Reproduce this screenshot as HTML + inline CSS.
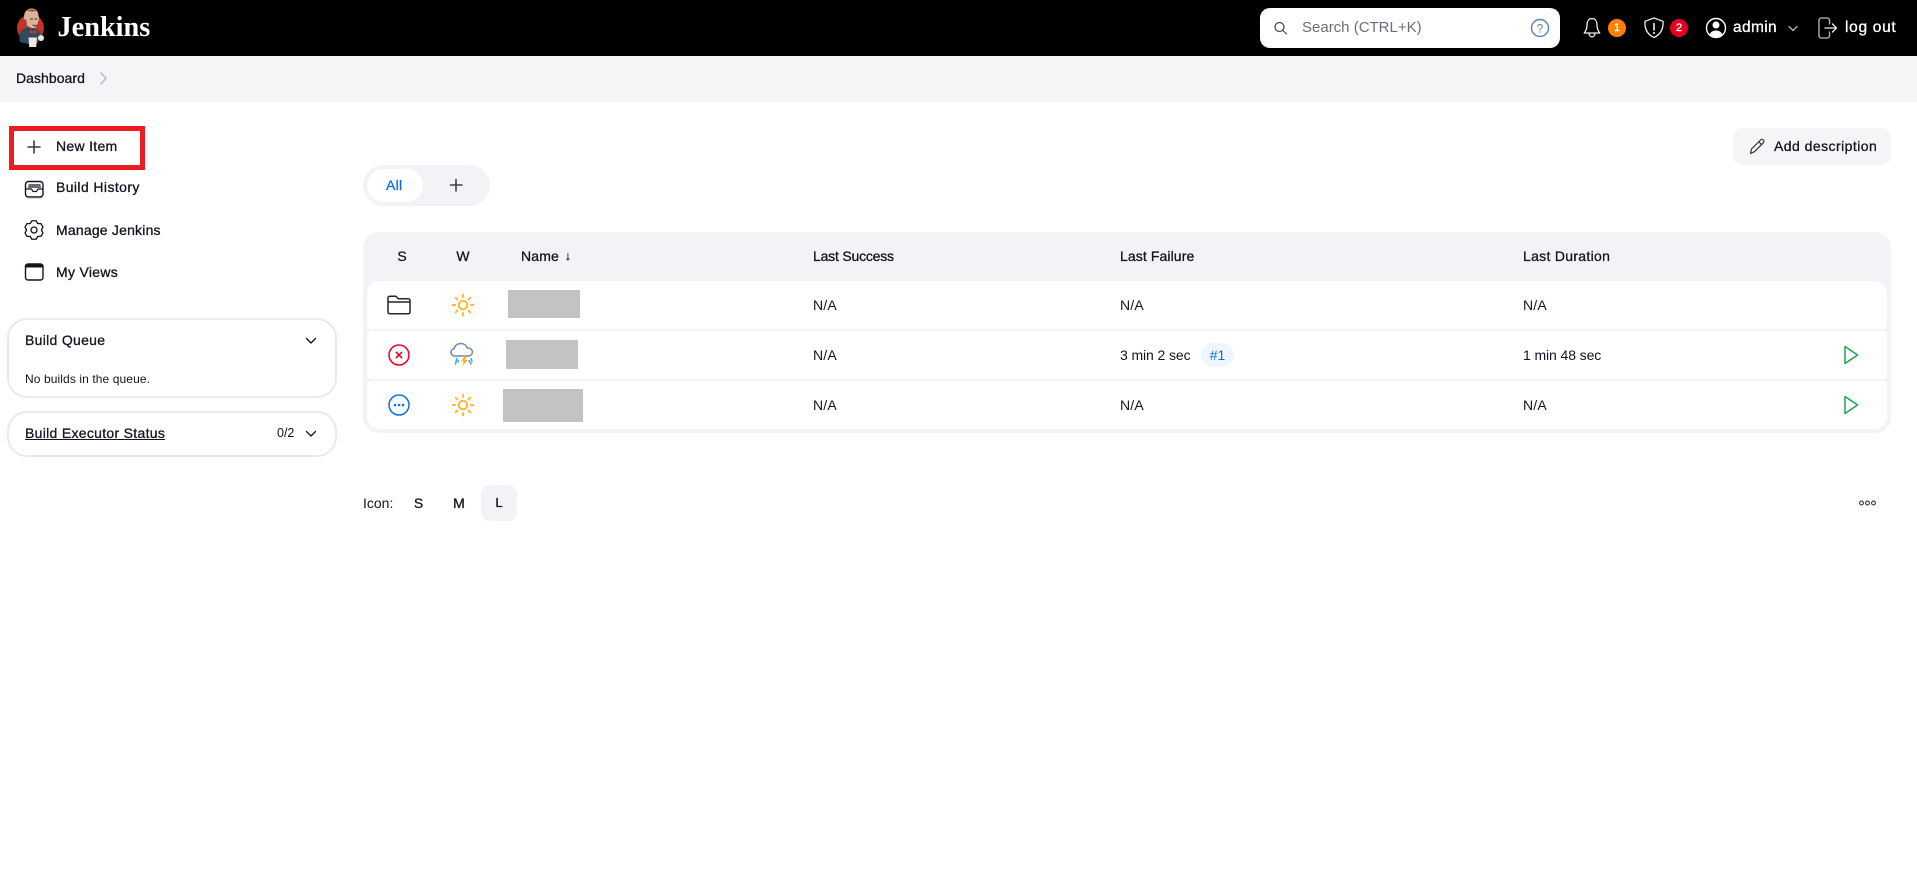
<!DOCTYPE html>
<html lang="en">
<head>
<meta charset="utf-8">
<title>Dashboard - Jenkins</title>
<style>
html,body{margin:0;padding:0;background:#fff}
body{position:relative;width:1917px;height:877px;overflow:hidden;font-family:"Liberation Sans",sans-serif;font-size:14px;color:#14141f}
.b{position:absolute;box-sizing:border-box}
.t{position:absolute;height:20px;line-height:20px;white-space:nowrap}
.m{-webkit-text-stroke:.3px currentColor}
.g{background:#c3c3c3;position:absolute}
svg.o{position:absolute;left:0;top:0;z-index:5}
</style>
</head>
<body>
<header class="b" style="left:0;top:0;width:1917px;height:56px;background:#000"></header>
<div class="t" style="left:57.500px;top:18px;font:bold 28.300px/20px 'Liberation Serif',serif;color:#fff">Jenkins</div>
<div class="b" style="left:1260px;top:8px;width:300px;height:40px;background:#fff;border-radius:10px"></div>
<div class="t" style="left:1302px;top:18px;font-size:15px;color:#6e6e78">Search (CTRL+K)</div>
<div class="b" style="left:1608px;top:19px;width:18px;height:18px;border-radius:50%;background:#fe820a"></div>
<div class="t m" style="left:1608px;top:18px;width:18px;text-align:center;font-size:11px;color:#fff">1</div>
<div class="b" style="left:1670px;top:19px;width:18px;height:18px;border-radius:50%;background:#e6001f"></div>
<div class="t m" style="left:1670px;top:18px;width:18px;text-align:center;font-size:11px;color:#fff">2</div>
<div class="t m" style="left:1733px;top:18px;font-size:15.500px;letter-spacing:.35px;color:#fff">admin</div>
<div class="t m" style="left:1845px;top:18px;font-size:15.500px;letter-spacing:.7px;color:#fff">log out</div>

<div class="b" style="left:0;top:56px;width:1917px;height:46px;background:#f5f5f7"></div>
<div class="t m" style="left:16px;top:68px;letter-spacing:.05px">Dashboard</div>

<nav>
<div class="b" style="left:9px;top:126px;width:136px;height:44px;border:5px solid #ed1c24"></div>
<div class="t m" style="left:56px;top:136px;letter-spacing:.3px">New Item</div>
<div class="t m" style="left:56px;top:177px;letter-spacing:.4px">Build History</div>
<div class="t m" style="left:56px;top:219.500px;letter-spacing:.2px">Manage Jenkins</div>
<div class="t m" style="left:56px;top:261.500px;letter-spacing:.3px">My Views</div>
</nav>

<div class="b" style="left:7px;top:318px;width:330px;height:80px;border:2px solid #e9e9f1;border-radius:20px"></div>
<div class="t m" style="left:25px;top:330px;letter-spacing:.3px">Build Queue</div>
<div class="t" style="left:25px;top:369px;font-size:12px;letter-spacing:.1px">No builds in the queue.</div>
<div class="b" style="left:7px;top:411px;width:330px;height:46px;border:2px solid #e9e9f1;border-radius:20px"></div>
<div class="t m" style="left:25px;top:423px;letter-spacing:.3px;text-decoration:underline">Build Executor Status</div>
<div class="t" style="left:277px;top:423px;font-size:12.500px">0/2</div>

<div class="b" style="left:1733px;top:128px;width:158px;height:37px;background:#f5f5f8;border-radius:10px"></div>
<div class="t m" style="left:1774px;top:135.500px;letter-spacing:.45px">Add description</div>

<div class="b" style="left:363px;top:165px;width:127px;height:41px;background:#f2f2f7;border-radius:21px"></div>
<div class="b" style="left:367px;top:169px;width:56px;height:33px;background:#fff;border-radius:17px"></div>
<div class="t m" style="left:386px;top:174.500px;letter-spacing:.3px;color:#0b6fe8">All</div>

<div class="b" style="left:363px;top:232px;width:1528px;height:201px;background:#f2f2f7;border-radius:16px"></div>
<div class="b" style="left:367px;top:281px;width:1520px;height:48px;background:#fff;border-radius:12px 12px 4px 4px"></div>
<div class="b" style="left:367px;top:331px;width:1520px;height:48px;background:#fff;border-radius:4px"></div>
<div class="b" style="left:367px;top:381px;width:1520px;height:48px;background:#fff;border-radius:4px 4px 12px 12px"></div>

<div class="t m" style="left:392px;top:246px;width:20px;text-align:center">S</div>
<div class="t m" style="left:453px;top:246px;width:20px;text-align:center">W</div>
<div class="t m" style="left:521px;top:246px;letter-spacing:.15px">Name</div>
<div class="t m" style="left:565px;top:246px;font-size:12px">↓</div>
<div class="t m" style="left:813px;top:246px;letter-spacing:-.2px">Last Success</div>
<div class="t m" style="left:1120px;top:246px;letter-spacing:.1px">Last Failure</div>
<div class="t m" style="left:1523px;top:246px;letter-spacing:.3px">Last Duration</div>

<div class="g" style="left:508px;top:290px;width:72px;height:28px"></div>
<div class="g" style="left:506px;top:340px;width:72px;height:29px"></div>
<div class="g" style="left:503px;top:389px;width:80px;height:33px"></div>

<div class="t" style="left:813px;top:295px;letter-spacing:.2px">N/A</div>
<div class="t" style="left:1120px;top:295px;letter-spacing:.2px">N/A</div>
<div class="t" style="left:1523px;top:295px;letter-spacing:.2px">N/A</div>
<div class="t" style="left:813px;top:345px;letter-spacing:.2px">N/A</div>
<div class="t" style="left:1120px;top:345px;letter-spacing:-.1px">3 min 2 sec</div>
<div class="b" style="left:1201px;top:343px;width:33px;height:24px;background:#f0f6fe;border-radius:12px"></div>
<div class="t" style="left:1201px;top:345px;width:33px;text-align:center;color:#0b6fe8">#1</div>
<div class="t" style="left:1523px;top:345px;letter-spacing:-.1px">1 min 48 sec</div>
<div class="t" style="left:813px;top:395px;letter-spacing:.2px">N/A</div>
<div class="t" style="left:1120px;top:395px;letter-spacing:.2px">N/A</div>
<div class="t" style="left:1523px;top:395px;letter-spacing:.2px">N/A</div>

<div class="t" style="left:363px;top:493px">Icon:</div>
<div class="t m" style="left:408.500px;top:493px;width:20px;text-align:center">S</div>
<div class="t m" style="left:449px;top:493px;width:20px;text-align:center">M</div>
<div class="b" style="left:481px;top:485px;width:36px;height:36px;background:#f2f2f7;border-radius:9px"></div>
<div class="t m" style="left:489px;top:493px;width:20px;text-align:center;font-size:13px">L</div>

<svg class="o" width="1917" height="877" viewBox="0 0 1917 877" fill="none" stroke-linecap="round" stroke-linejoin="round">
<!-- Jenkins logo -->
<circle cx="30.500" cy="28" r="13.500" fill="#c7302b"/>
<path d="M20 42c-1.500-6-.5-11 3-13l7-2.500 8 3.500 3.500 6-2.500 4-1 3-8 1.500z" fill="#2f4a5c"/>
<path d="M28.500 37.500h8.500l-.8 9.500h-7z" fill="#ece8df"/>
<path d="M30 30l3 1.500 3-1.500v3.800l-3-1.300-3 1.300z" fill="#e4312b"/>
<circle cx="41" cy="38" r="3" fill="#ece8df"/>
<path d="M24 17c0-5.500 3.500-8.500 7.500-8.500s7 2.500 7 7.500c1 1 1 3 .2 4l-1.200 4.500c-1 3.500-4.500 4.500-7.500 3-2.500-1.200-4.500-3.500-5.200-6.500-.7-1-.8-3-.8-4z" fill="#dcb394"/>
<path d="M27 11c2.500-2 7-2 9.500 0-3 .5-6.500.5-9.500 0zM24.300 20l1.700-1 1 6-1.700-1.500z" fill="#6e5141"/>
<path d="M30.500 19h2M35 19h2M33 25c1 1 2.500 1 4 0" stroke="#3e2a22" stroke-width="1"/>
<!-- search -->
<circle cx="1279.500" cy="27" r="4.500" stroke="#444" stroke-width="1.200"/>
<path d="M1283 30.500l3.500 3.500" stroke="#444" stroke-width="1.200"/>
<circle cx="1540" cy="28" r="8.500" stroke="#5f86b8" stroke-width="1.500"/>
<text x="1540" y="32.500" text-anchor="middle" font-family="Liberation Sans" font-size="12" fill="#5f86b8">?</text>
<!-- bell -->
<path d="M1592 18.500c-3.500 0-5 3-5 6.500 0 4-1 6-2.800 8h15.600c-1.800-2-2.800-4-2.800-8 0-3.500-1.500-6.500-5-6.500zM1589 33.500c.3 2 1.500 3.500 3 3.500s2.700-1.500 3-3.500" stroke="#eee" stroke-width="1.300"/>
<!-- shield -->
<path d="M1654 18l9 3.300c.5 7-1.500 12.700-9 16.200-7.500-3.500-9.500-9.200-9-16.200z" stroke="#eee" stroke-width="1.300"/>
<path d="M1654 23.500v6.500" stroke="#fff" stroke-width="1.500"/><circle cx="1654" cy="33" r="1" fill="#fff"/>
<!-- user -->
<circle cx="1716" cy="28" r="9.500" stroke="#fff" stroke-width="1.400"/>
<circle cx="1716" cy="25" r="3.500" fill="#fff"/>
<path d="M1709.500 34.500c1.500-3 4-4 6.500-4s5 1 6.500 4c-3.500 3.500-9.500 3.500-13 0z" fill="#fff"/>
<path d="M1789 26.500l4 4 4-4" stroke="#ddd" stroke-width="1.100"/>
<!-- logout -->
<path d="M1829.500 24v-3.500c0-1.500-1-2.500-2.500-2.500h-5.500c-1.500 0-2.500 1-2.500 2.500v15c0 1.500 1 2.500 2.500 2.500h5.500c1.500 0 2.500-1 2.500-2.500V32" stroke="#bbb" stroke-width="1.300"/>
<path d="M1825 28h11.500M1832.500 24l4 4-4 4" stroke="#eee" stroke-width="1.300"/>
<!-- breadcrumb chevron -->
<path d="M101 73l5 5.500-5 5.500" stroke="#a9b4c6" stroke-width="1.300"/>
<!-- new item plus -->
<path d="M34 141v12M28 147h12" stroke="#3b3b47" stroke-width="1.600"/>
<!-- build history -->
<rect x="25.500" y="181.500" width="17.500" height="15.500" rx="3" stroke="#14141f" stroke-width="1.400"/>
<path d="M25.500 189h6l1.500 2.500h3.500l1.500-2.500h5M29 185h11M28.500 187h12" stroke="#14141f" stroke-width="1.200"/>
<path d="M27 198h15" stroke="#b6b6c0" stroke-width="1"/>
<!-- gear -->
<g transform="translate(34 230)" stroke="#14141f" stroke-width="1.300">
<path d="M-2.080-9.280L2.080-9.280 3.700-6.500 7-6.300 9-2.900 7.400 0 9 2.900 7 6.300 3.700 6.500 2.080 9.280-2.080 9.280-3.700 6.500-7 6.300-9 2.900-7.400 0-9-2.900-7-6.300-3.700-6.500z"/>
<circle r="3"/>
</g>
<!-- my views -->
<rect x="25.500" y="264" width="17.500" height="16" rx="2.500" stroke="#14141f" stroke-width="1.400"/>
<path d="M25.500 266.500c0-1.500 1-2.500 2.500-2.500h12.500c1.500 0 2.500 1 2.500 2.500v1h-17.500z" fill="#14141f"/>
<!-- card chevrons -->
<path d="M306.500 338.500l4.500 4.500 4.500-4.500M306.500 431.500l4.500 4.500 4.500-4.500" stroke="#14141f" stroke-width="1.300"/>
<!-- pencil -->
<path d="M1750.500 153.500l1-4.500 9-9c.8-.8 2-.8 2.800 0 .8.800.8 2 0 2.800l-9 9zM1759 142l2.800 2.800" stroke="#333" stroke-width="1.200"/>
<!-- tab plus -->
<path d="M456 179.500v11.500M450.500 185h11.500" stroke="#444" stroke-width="1.600"/>
<!-- folder -->
<path d="M388 312v-14c0-1 .7-1.800 1.800-1.800h6l2.500 2.500h10c1 0 1.700.8 1.700 1.800v11.500c0 1-.7 1.800-1.700 1.800h-18.500c-1.100 0-1.800-.8-1.800-1.800zM388 302h22" stroke="#24242f" stroke-width="1.500"/>
<!-- status -->
<circle cx="399" cy="355" r="10" stroke="#e6001f" stroke-width="1.500"/>
<path d="M396.300 352.300l5.400 5.400M401.700 352.300l-5.400 5.400" stroke="#e6001f" stroke-width="1.500"/>
<circle cx="399" cy="405" r="10" stroke="#0b6fe8" stroke-width="1.500"/>
<circle cx="395" cy="405" r="1.300" fill="#0b6fe8"/><circle cx="399" cy="405" r="1.300" fill="#0b6fe8"/><circle cx="403" cy="405" r="1.300" fill="#0b6fe8"/>
<!-- suns -->
<g stroke="#ffb020" stroke-width="1.700" transform="translate(463 305)">
<circle r="4.300"/><path d="M0-10.500v2.800M0 7.700v2.800M-10.500 0h2.800M7.700 0h2.800M-7.400-7.400l1.900 1.900M5.500 5.500l1.900 1.900M-7.400 7.400l1.900-1.900M5.500-5.500l1.900-1.900"/>
</g>
<g stroke="#ffb020" stroke-width="1.700" transform="translate(463 405)">
<circle r="4.300"/><path d="M0-10.500v2.800M0 7.700v2.800M-10.500 0h2.800M7.700 0h2.800M-7.400-7.400l1.900 1.900M5.500 5.500l1.900 1.900M-7.400 7.400l1.900-1.900M5.500-5.500l1.900-1.900"/>
</g>
<!-- storm -->
<path d="M456 356h-1.500c-2 0-3.500-1.700-3.500-3.600 0-1.900 1.300-3.300 3-3.600.6-3 3.500-5.300 6.800-5.300 3.200 0 5.800 2 6.600 4.600h1c2.200 0 4 1.800 4 4s-1.800 3.900-4 3.900z" stroke="#6a8bb3" stroke-width="1.500"/>
<path d="M464.500 356.500l-3.500 5h3l-2 5 6-6.500h-3l2-3.500z" fill="#ffb020"/>
<path d="M457 358.500l-1 3M471 358.500l1 3M456 362.500l-.5 1.500M458.500 360.500l-.5 1.500M469 360.500l.5 1.500M470.500 362.500l.5 1.500" stroke="#3ea4e0" stroke-width="1.500"/>
<!-- play -->
<path d="M1845 346.500v17l12.500-8.500zM1845 396.500v17l12.500-8.500z" stroke="#1ea64b" stroke-width="1.500"/>
<!-- more -->
<circle cx="1861.500" cy="503" r="1.900" stroke="#333" stroke-width="1.100"/>
<circle cx="1867.500" cy="503" r="1.900" stroke="#333" stroke-width="1.100"/>
<circle cx="1873.500" cy="503" r="1.900" stroke="#333" stroke-width="1.100"/>
</svg>
</body>
</html>
